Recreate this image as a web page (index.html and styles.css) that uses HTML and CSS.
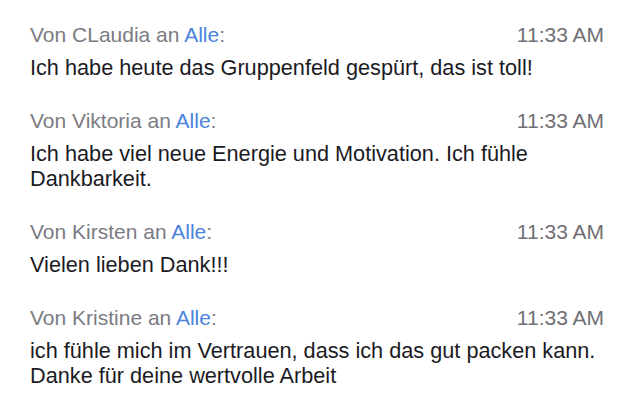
FILE: index.html
```html
<!DOCTYPE html>
<html>
<head>
<meta charset="utf-8">
<link rel="stylesheet" href="styles.css">
</head>
<body>
<div class="chat">
  <div class="msg">
    <div class="head"><span class="from">Von CLaudia an <span class="to">Alle</span>:</span><span class="time">11:33 AM</span></div>
    <div class="text">Ich habe heute das Gruppenfeld gespürt, das ist toll!</div>
  </div>
  <div class="msg">
    <div class="head"><span class="from">Von Viktoria an <span class="to">Alle</span>:</span><span class="time">11:33 AM</span></div>
    <div class="text">Ich habe viel neue Energie und Motivation. Ich fühle Dankbarkeit.</div>
  </div>
  <div class="msg">
    <div class="head"><span class="from">Von Kirsten an <span class="to">Alle</span>:</span><span class="time">11:33 AM</span></div>
    <div class="text">Vielen lieben Dank!!!</div>
  </div>
  <div class="msg">
    <div class="head"><span class="from">Von Kristine an <span class="to">Alle</span>:</span><span class="time">11:33 AM</span></div>
    <div class="text">ich fühle mich im Vertrauen, dass ich das gut packen kann. Danke für deine wertvolle Arbeit</div>
  </div>
</div>
</body>
</html>
```
FILE: styles.css
```css
html, body {
  margin: 0;
  padding: 0;
  background: #ffffff;
}
body {
  font-family: "Liberation Sans", Arial, Helvetica, sans-serif;
  width: 618px;
  height: 414px;
  overflow: hidden;
}
.chat {
  display: flex;
  flex-direction: column;
  gap: 29px;
  padding: 23px 14px 0 30px;
}
.msg {
  display: flex;
  flex-direction: column;
  gap: 8px;
}
.head {
  display: flex;
  justify-content: space-between;
  font-size: 21px;
  line-height: 24px;
  color: #7b7b82;
}
.to {
  color: #4a84dc;
}
.time {
  color: #6f6f74;
}
.text {
  font-size: 21.7px;
  line-height: 25px;
  color: #1b1b1f;
}
```
